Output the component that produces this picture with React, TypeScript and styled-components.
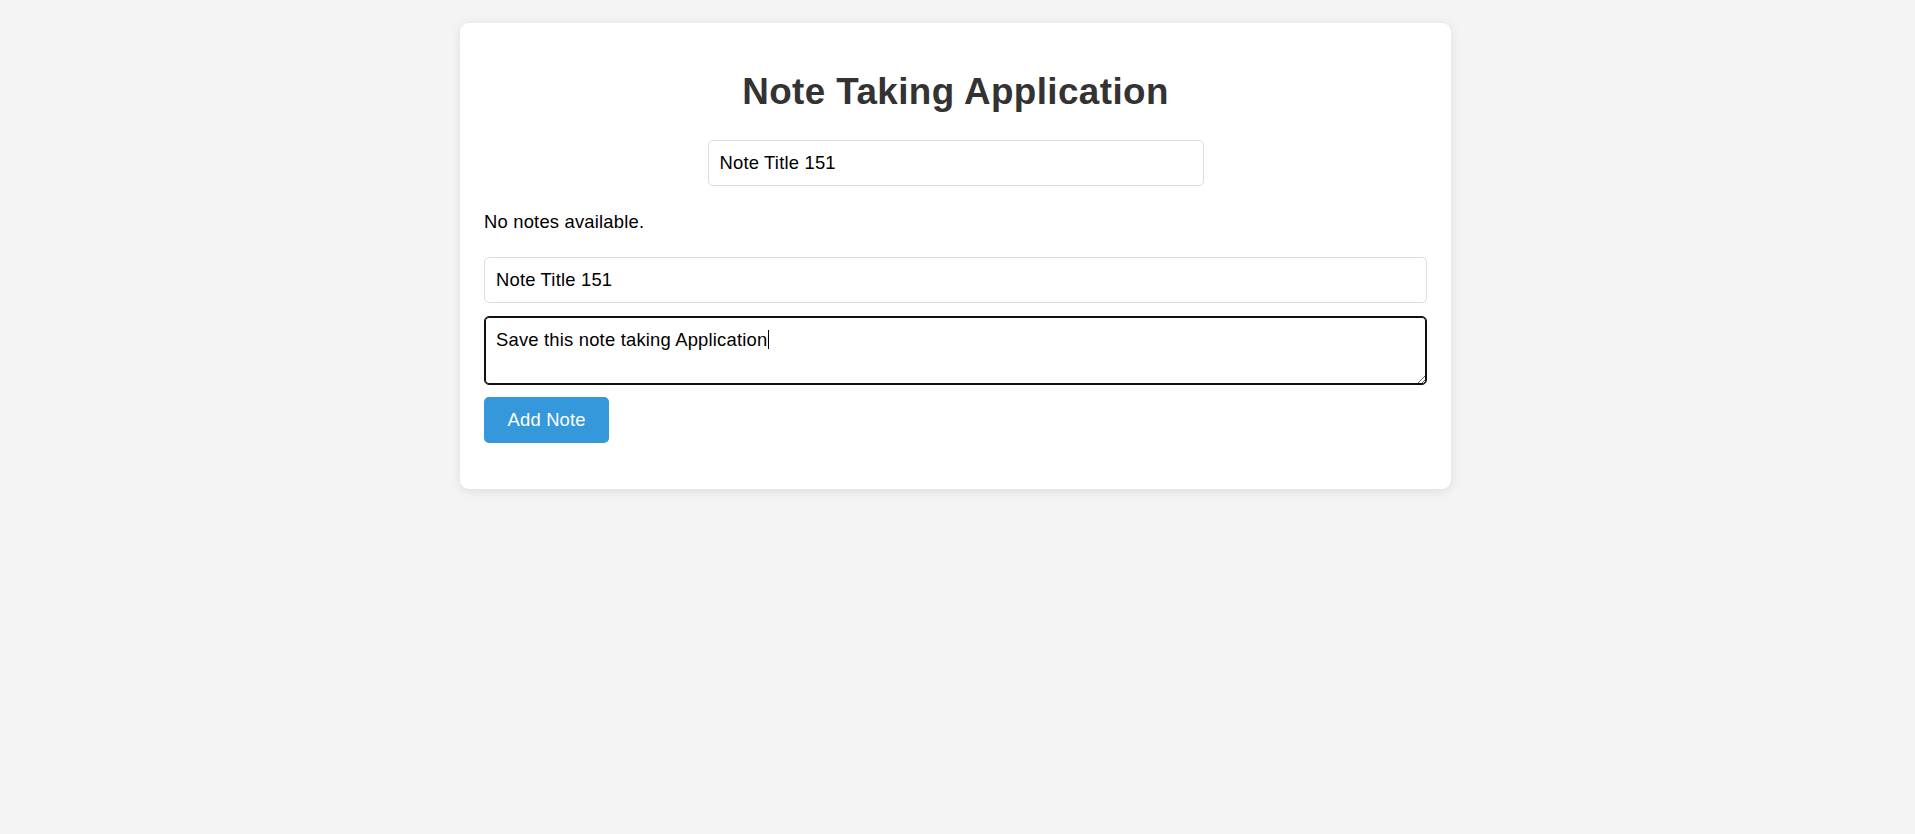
import React from "react";
import styled, { createGlobalStyle } from "styled-components";

const GlobalStyle = createGlobalStyle`
  html, body {
    margin: 0;
    padding: 0;
    background: #f4f4f4;
    font-family: "Liberation Sans", Arial, sans-serif;
    font-size: 18.4px;
    color: #000;
  }
  * { box-sizing: border-box; }
`;

const Page = styled.div`
  display: flex;
  justify-content: center;
  padding: 23px 4px 0 0;
  min-height: 834px;
`;

const Card = styled.div`
  width: 991px;
  align-self: flex-start;
  background: #fff;
  border-radius: 9px;
  box-shadow: 0 2px 11px rgba(0, 0, 0, 0.1);
  padding: 23px 24px 46px 24px;
  display: flex;
  flex-direction: column;
`;

const Title = styled.h1`
  margin: 25px 0 27px 0;
  text-align: center;
  font-size: 36.8px;
  letter-spacing: 0.42px;
  font-weight: 700;
  color: #333;
  line-height: normal;
`;

const TextField = styled.input<{ $narrow?: boolean }>`
  display: block;
  width: ${(p) => (p.$narrow ? "496px" : "100%")};
  align-self: ${(p) => (p.$narrow ? "center" : "stretch")};
  height: 46px;
  padding: 0 11px;
  border: 1px solid #ddd;
  border-radius: 5px;
  font-family: "Liberation Sans", Arial, sans-serif;
  font-size: 18.4px;
  letter-spacing: 0.2px;
  color: #000;
  background: #fff;
  outline: none;
`;

const EmptyText = styled.p`
  margin: 25px 0 24px 0;
  font-size: 18.4px;
  letter-spacing: 0.2px;
  line-height: normal;
  color: #000;
`;

const AreaWrap = styled.div`
  position: relative;
  margin-top: 13px;
`;

const NoteArea = styled.textarea`
  display: block;
  width: 100%;
  height: 69px;
  padding: 11.5px 11px;
  border: 1px solid #101010;
  box-shadow: inset 0 0 0 1px #101010;
  border-radius: 5px;
  font-family: "Liberation Sans", Arial, sans-serif;
  font-size: 18.4px;
  letter-spacing: 0.2px;
  line-height: normal;
  color: #000;
  background: #fff;
  outline: none;
  resize: vertical;
`;

const Caret = styled.span`
  position: absolute;
  left: 284px;
  top: 13.5px;
  width: 1.4px;
  height: 19px;
  background: #000;
  pointer-events: none;
`;

const AddButton = styled.button`
  align-self: flex-start;
  margin-top: 12px;
  height: 45.5px;
  padding: 0 23.5px;
  border: none;
  border-radius: 5px;
  background: #3498db;
  color: #fff;
  font-family: "Liberation Sans", Arial, sans-serif;
  font-size: 18.4px;
  letter-spacing: 0.2px;
  line-height: normal;
  cursor: pointer;
`;

export default function App() {
  return (
    <>
      <GlobalStyle />
      <Page>
        <Card>
          <Title>Note Taking Application</Title>
          <TextField $narrow type="text" defaultValue="Note Title 151" />
          <EmptyText>No notes available.</EmptyText>
          <TextField type="text" defaultValue="Note Title 151" />
          <AreaWrap>
            <NoteArea defaultValue="Save this note taking Application" />
            <Caret />
          </AreaWrap>
          <AddButton type="button">Add Note</AddButton>
        </Card>
      </Page>
    </>
  );
}
